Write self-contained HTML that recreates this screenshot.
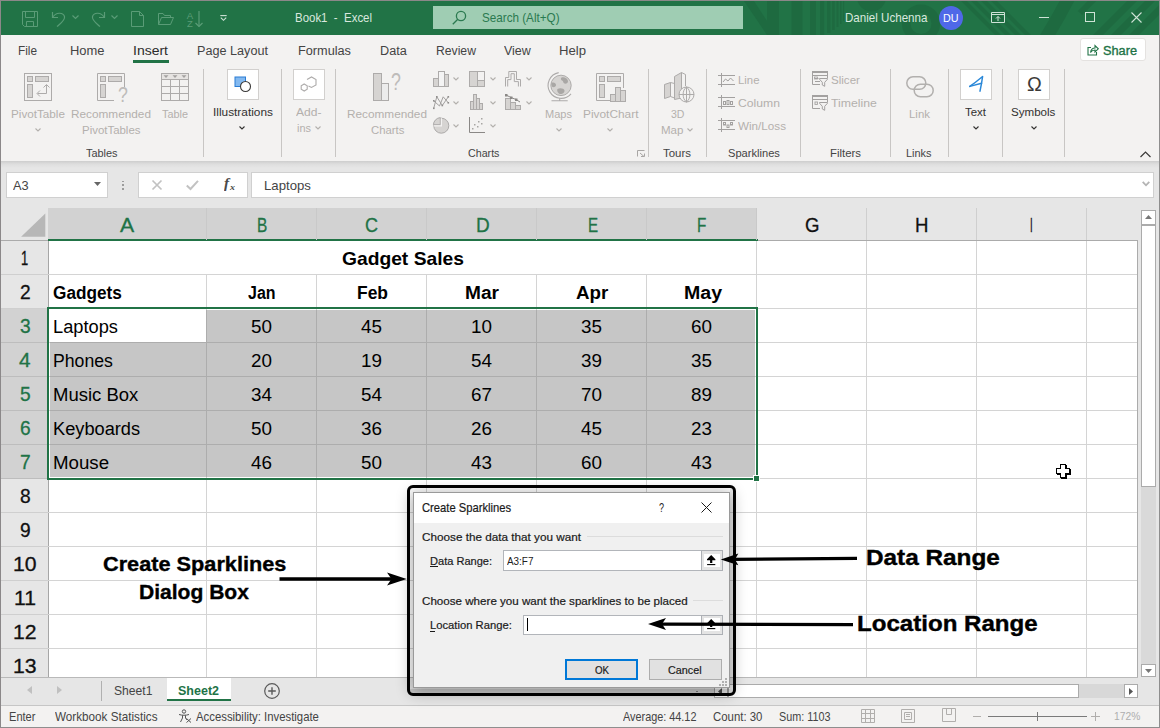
<!DOCTYPE html>
<html><head><meta charset="utf-8"><title>Excel</title>
<style>
html,body{margin:0;padding:0;}
body{width:1160px;height:728px;overflow:hidden;position:relative;background:#e6e6e6;font-family:"Liberation Sans",sans-serif;}
.r{position:absolute;box-sizing:border-box;display:block;}
.t{position:absolute;display:block;white-space:pre;transform-origin:0 0;font-family:"Liberation Sans",sans-serif;}
svg{overflow:visible;}
</style></head><body>
<div class="r" style="left:0px;top:0px;width:1160px;height:728px;background:#e6e6e6;"></div>
<div class="r" style="left:0px;top:1px;width:1160px;height:34px;background:#217346;"></div>
<svg class="r" style="left:740px;top:1px;overflow:hidden;" width="420" height="34" viewBox="0 0 420 34"><g fill="#1e6a40" stroke="none"><path d="M4 0L14 0L36 34L27 34Z"/><rect x="27" y="0" width="12" height="34"/><rect x="51.5" y="0" width="11" height="34"/><rect x="70" y="0" width="6" height="34"/><rect x="80" y="0" width="4.2" height="34"/><rect x="87" y="0" width="3.4" height="32"/><rect x="92.2" y="0" width="2.5" height="29"/><rect x="96.5" y="0" width="2" height="26"/><rect x="100" y="0" width="1.5" height="23"/><rect x="103" y="0" width="1.2" height="20"/><circle cx="131.5" cy="-4" r="14.5"/></g><g fill="none" stroke="#1e6a40"><circle cx="181" cy="22.5" r="14.8" stroke-width="8.5"/><path d="M222 -2L262 38M232 -2L272 38M242 -2L282 38M252 -2L292 38" stroke-width="4.2"/><path d="M330 -6C322 10 314 24 304 40" stroke-width="13"/><path d="M340 12L356 -4" stroke-width="6"/><path d="M352 40L396 -4M370 40L414 -4M388 40L432 -4" stroke-width="7"/></g></svg>
<div class="r" style="left:0px;top:0px;width:1160px;height:1px;background:#8b8889;"></div>
<div class="r" style="left:0px;top:0px;width:1px;height:728px;background:#8b8889;"></div>
<svg class="r" style="left:22px;top:11px;" width="17" height="17" viewBox="0 0 17 17"><g fill="none" stroke="#5a9c77" stroke-width="1"><path d="M0.5 0.5H15.5V15.5H2.5L0.5 13.5Z"/><path d="M3.5 0.5V6.5H12.5V0.5"/><path d="M4.5 15.5V10.5H11.5V15.5"/></g></svg>
<svg class="r" style="left:51px;top:11px;" width="18" height="17" viewBox="0 0 18 17"><g fill="none" stroke="#5a9c77" stroke-width="1.2"><path d="M1.5 1V6.5H7"/><path d="M1.5 6.5C5 1 12 1 13.5 5.5C14.5 9 10 12 6 15.5"/></g></svg>
<svg class="r" style="left:72px;top:15px;" width="7" height="5" viewBox="0 0 7 5"><path d="M0.5 0.5L3.5 3.5L6.5 0.5" fill="none" stroke="#5a9c77" stroke-width="1.2"/></svg>
<svg class="r" style="left:90px;top:11px;" width="18" height="17" viewBox="0 0 18 17"><g fill="none" stroke="#5a9c77" stroke-width="1.2"><path d="M14.5 1V6.5H9"/><path d="M14.5 6.5C11 1 4 1 2.5 5.5C1.5 9 6 12 10 15.5"/></g></svg>
<svg class="r" style="left:111px;top:15px;" width="7" height="5" viewBox="0 0 7 5"><path d="M0.5 0.5L3.5 3.5L6.5 0.5" fill="none" stroke="#5a9c77" stroke-width="1.2"/></svg>
<svg class="r" style="left:131px;top:11px;" width="13" height="16" viewBox="0 0 13 16"><g fill="none" stroke="#5a9c77" stroke-width="1"><path d="M0.5 0.5H8.5L12.5 4.5V15.5H0.5Z"/><path d="M8.5 0.5V4.5H12.5"/></g></svg>
<svg class="r" style="left:158px;top:13px;" width="16" height="12" viewBox="0 0 16 12"><g fill="none" stroke="#5a9c77" stroke-width="1"><path d="M0.5 11.5V0.5H5L6.5 2.5H12.5V4.5"/><path d="M0.5 11.5L3.5 4.5H15.5L12.5 11.5Z"/></g></svg>
<span class="t" style="left:186.80px;top:11.000px;font-size:9.60px;line-height:9.60px;color:#5a9c77;transform:scaleX(1.0000);">A</span>
<span class="t" style="left:187.00px;top:19.000px;font-size:9.60px;line-height:9.60px;color:#5a9c77;transform:scaleX(0.9831);">Z</span>
<svg class="r" style="left:195px;top:11px;" width="8" height="17" viewBox="0 0 8 17"><g fill="none" stroke="#5a9c77" stroke-width="1.2"><path d="M4 0V15.5"/><path d="M0.5 12L4 15.5L7.5 12"/></g></svg>
<svg class="r" style="left:220px;top:15px;" width="7" height="6" viewBox="0 0 7 6"><g fill="none" stroke="#cfe3d7" stroke-width="1.1"><path d="M0.3 0.6H6.7"/><path d="M0.8 2.6L3.5 5.3L6.2 2.6"/></g></svg>
<span class="t" style="left:295.00px;top:11.000px;font-size:13.00px;line-height:13.00px;color:#d9e8df;transform:scaleX(0.8810);">Book1  -  Excel</span>
<div class="r" style="left:433px;top:6px;width:310px;height:23px;background:#9fcdb3;"></div>
<svg class="r" style="left:452px;top:10px;" width="15" height="15" viewBox="0 0 15 15"><g fill="none" stroke="#2b7a50" stroke-width="1.3"><circle cx="9" cy="6" r="4.6"/><path d="M5.8 9.2L0.8 14.2"/></g></svg>
<span class="t" style="left:482.00px;top:11.000px;font-size:13.00px;line-height:13.00px;color:#2b7a50;transform:scaleX(0.8980);">Search (Alt+Q)</span>
<span class="t" style="left:845.00px;top:11.000px;font-size:13.00px;line-height:13.00px;color:#d9e8df;transform:scaleX(0.8909);">Daniel Uchenna</span>
<div class="r" style="left:938.5px;top:5.5px;width:24px;height:24px;border-radius:50%;background:#4f68e8;"></div>
<span class="t" style="left:943.00px;top:13.000px;font-size:11.00px;line-height:11.00px;color:#ffffff;transform:scaleX(0.9748);">DU</span>
<svg class="r" style="left:991px;top:12px;" width="14" height="11" viewBox="0 0 14 11"><g fill="none" stroke="#cfe3d7" stroke-width="1"><path d="M0.5 0.5H13.5V10.5H0.5Z"/><path d="M0.5 2.5H13.5"/><path d="M7 9V4.5M5 6.5L7 4.5L9 6.5"/></g></svg>
<div class="r" style="left:1039px;top:17px;width:10px;height:1px;background:#cfe3d7;"></div>
<div class="r" style="left:1085px;top:12px;width:10px;height:10px;border:1px solid #cfe3d7;"></div>
<svg class="r" style="left:1131px;top:12px;" width="11" height="11" viewBox="0 0 11 11"><path d="M0.5 0.5L10.5 10.5M10.5 0.5L0.5 10.5" fill="none" stroke="#cfe3d7" stroke-width="1.1"/></svg>
<div class="r" style="left:1px;top:35px;width:1159px;height:127px;background:#f3f2f1;"></div>
<span class="t" style="left:18.00px;top:45.000px;font-size:12.30px;line-height:12.30px;color:#444444;transform:scaleX(0.9596);">File</span>
<span class="t" style="left:70.00px;top:45.000px;font-size:12.30px;line-height:12.30px;color:#444444;transform:scaleX(1.0518);">Home</span>
<span class="t" style="left:133.00px;top:45.000px;font-size:12.30px;line-height:12.30px;color:#2b2b2b;transform:scaleX(1.1364);">Insert</span>
<div class="r" style="left:133px;top:60px;width:36px;height:3px;background:#217346;"></div>
<span class="t" style="left:197.00px;top:45.000px;font-size:12.30px;line-height:12.30px;color:#444444;transform:scaleX(1.0275);">Page Layout</span>
<span class="t" style="left:298.00px;top:45.000px;font-size:12.30px;line-height:12.30px;color:#444444;transform:scaleX(1.0331);">Formulas</span>
<span class="t" style="left:380.00px;top:45.000px;font-size:12.30px;line-height:12.30px;color:#444444;transform:scaleX(1.0308);">Data</span>
<span class="t" style="left:436.00px;top:45.000px;font-size:12.30px;line-height:12.30px;color:#444444;transform:scaleX(0.9901);">Review</span>
<span class="t" style="left:504.00px;top:45.000px;font-size:12.30px;line-height:12.30px;color:#444444;transform:scaleX(1.0150);">View</span>
<span class="t" style="left:559.00px;top:45.000px;font-size:12.30px;line-height:12.30px;color:#444444;transform:scaleX(1.0672);">Help</span>
<div class="r" style="left:1079.5px;top:38.4px;width:66.8px;height:22.9px;background:#fff;border:1px solid #e4e2e0;border-radius:3px;"></div>
<svg class="r" style="left:1087px;top:44px;" width="12" height="12" viewBox="0 0 12 12"><g fill="none" stroke="#217346" stroke-width="1.1"><path d="M4 3.5H1V11H9.5V8"/><path d="M3.5 8.5C4 5.5 6 4 8 4V1.5L11.3 4.8L8 8V6C6 6 4.5 7 3.5 8.5Z"/></g></svg>
<span class="t" style="left:1103.00px;top:45.000px;font-size:12.30px;line-height:12.30px;color:#217346;transform:scaleX(1.0366);-webkit-text-stroke:0.35px #217346;">Share</span>
<div class="r" style="left:203px;top:69px;width:1px;height:88px;background:#c8c6c4;"></div>
<div class="r" style="left:281px;top:69px;width:1px;height:88px;background:#c8c6c4;"></div>
<div class="r" style="left:335px;top:69px;width:1px;height:88px;background:#c8c6c4;"></div>
<div class="r" style="left:648px;top:69px;width:1px;height:88px;background:#c8c6c4;"></div>
<div class="r" style="left:706px;top:69px;width:1px;height:88px;background:#c8c6c4;"></div>
<div class="r" style="left:800px;top:69px;width:1px;height:88px;background:#c8c6c4;"></div>
<div class="r" style="left:890px;top:69px;width:1px;height:88px;background:#c8c6c4;"></div>
<div class="r" style="left:948px;top:69px;width:1px;height:88px;background:#c8c6c4;"></div>
<div class="r" style="left:1002px;top:69px;width:1px;height:88px;background:#c8c6c4;"></div>
<div class="r" style="left:1064px;top:69px;width:1px;height:88px;background:#c8c6c4;"></div>
<div class="r" style="left:1px;top:161px;width:1159px;height:7px;background:linear-gradient(#cdcdcd,#dedede 45%,#e6e6e6);"></div>
<svg class="r" style="left:24px;top:73px;" width="28" height="28" viewBox="0 0 28 28"><g fill="none" stroke="#adabaa" stroke-width="1"><rect x="0.5" y="0.5" width="27" height="27" fill="#f3f2f1"/></g><rect x="3.5" y="3.5" width="5" height="5" fill="#d6d4d2" stroke="#adabaa"/><rect x="11.5" y="3.5" width="13" height="5" fill="#d6d4d2" stroke="#adabaa"/><rect x="3.5" y="11.5" width="5" height="13" fill="#d6d4d2" stroke="#adabaa"/><path d="M22.5 12V20.5H13.5M16 17.5L13 20.5L16 23.5M19.5 14.5L22.5 11.5L25.5 14.5" fill="none" stroke="#adabaa"/></svg>
<span class="t" style="left:11.00px;top:108.000px;font-size:11.70px;line-height:11.70px;color:#b3b0ad;transform:scaleX(1.0000);">PivotTable</span>
<svg class="r" style="left:34.5px;top:128px;" width="6" height="4" viewBox="0 0 6 4"><path d="M0.5 0.5L3 3L5.5 0.5" fill="none" stroke="#b3b0ad" stroke-width="1.1"/></svg>
<svg class="r" style="left:97px;top:73px;" width="30" height="30" viewBox="0 0 30 30"><path d="M27.5 14V0.5H0.5V27.5H17" fill="none" stroke="#adabaa"/><rect x="3.5" y="3.5" width="5" height="5" fill="#d6d4d2" stroke="#adabaa"/><rect x="11.5" y="3.5" width="13" height="5" fill="#d6d4d2" stroke="#adabaa"/><rect x="3.5" y="11.5" width="5" height="13" fill="#d6d4d2" stroke="#adabaa"/></svg>
<span class="t" style="left:117.50px;top:85.000px;font-size:21.50px;line-height:21.50px;color:#bebcba;transform:scaleX(0.8250);">?</span>
<span class="t" style="left:71.00px;top:108.000px;font-size:11.70px;line-height:11.70px;color:#b3b0ad;transform:scaleX(1.0088);">Recommended</span>
<span class="t" style="left:81.50px;top:124.000px;font-size:11.70px;line-height:11.70px;color:#b3b0ad;transform:scaleX(0.9783);">PivotTables</span>
<svg class="r" style="left:161px;top:73px;" width="28" height="28" viewBox="0 0 28 28"><rect x="0.5" y="0.5" width="27" height="27" fill="#f3f2f1" stroke="#adabaa"/><rect x="1" y="1" width="26" height="5.5" fill="#e6e4e2"/><path d="M0.5 6.5H27.5M0.5 13.5H27.5M0.5 20.5H27.5M9.5 6.5V27.5M18.5 6.5V27.5" stroke="#adabaa" fill="none"/><path d="M2.5 2.3H7.5L5 5ZM11.5 2.3H16.5L14 5ZM20.5 2.3H25.5L23 5Z" fill="#a3a1a0"/></svg>
<span class="t" style="left:162.00px;top:108.000px;font-size:11.70px;line-height:11.70px;color:#b3b0ad;transform:scaleX(0.9286);">Table</span>
<span class="t" style="left:86.00px;top:147.000px;font-size:11.60px;line-height:11.60px;color:#444444;transform:scaleX(0.9403);">Tables</span>
<div class="r" style="left:227px;top:69px;width:32px;height:31px;background:#fff;border:1px solid #d2d0ce;"></div>
<svg class="r" style="left:234px;top:76px;" width="18" height="17" viewBox="0 0 18 17"><rect x="1" y="1" width="10.5" height="9.5" fill="#83b9f0" stroke="#2b7cd3" stroke-width="1"/><circle cx="11.5" cy="10.5" r="5" fill="#fff" stroke="#3b3a39" stroke-width="1.1"/></svg>
<span class="t" style="left:212.50px;top:106.000px;font-size:11.70px;line-height:11.70px;color:#323130;transform:scaleX(1.0135);">Illustrations</span>
<svg class="r" style="left:239px;top:125.5px;" width="6" height="4" viewBox="0 0 6 4"><path d="M0.5 0.5L3 3L5.5 0.5" fill="none" stroke="#323130" stroke-width="1.1"/></svg>
<div class="r" style="left:293px;top:69px;width:32px;height:31px;background:#fff;border:1px solid #d2d0ce;"></div>
<svg class="r" style="left:300px;top:76px;" width="18" height="17" viewBox="0 0 18 17"><g fill="none" stroke="#adabaa" stroke-width="1.1"><path d="M7 3.5L11.5 1L16 3.5V9L11.5 11.5L8.5 10"/><path d="M4.2 8L7.2 9.7V13.2L4.2 15L1.2 13.2V9.7Z"/></g></svg>
<span class="t" style="left:295.50px;top:106.000px;font-size:11.70px;line-height:11.70px;color:#b3b0ad;transform:scaleX(1.0324);">Add-</span>
<span class="t" style="left:297.00px;top:122.000px;font-size:11.70px;line-height:11.70px;color:#b3b0ad;transform:scaleX(0.9333);">ins</span>
<svg class="r" style="left:314.5px;top:126px;" width="6" height="4" viewBox="0 0 6 4"><path d="M0.5 0.5L3 3L5.5 0.5" fill="none" stroke="#b3b0ad" stroke-width="1.1"/></svg>
<svg class="r" style="left:373px;top:72px;" width="29" height="30" viewBox="0 0 29 30"><rect x="0.5" y="1.5" width="8" height="27" fill="#d6d4d2" stroke="#adabaa"/><rect x="8.5" y="11.5" width="7" height="17" fill="#ececec" stroke="#adabaa"/></svg>
<span class="t" style="left:391.30px;top:71.000px;font-size:23.50px;line-height:23.50px;color:#bebcba;transform:scaleX(0.7557);">?</span>
<span class="t" style="left:347.00px;top:108.000px;font-size:11.70px;line-height:11.70px;color:#b3b0ad;transform:scaleX(1.0088);">Recommended</span>
<span class="t" style="left:370.50px;top:124.000px;font-size:11.70px;line-height:11.70px;color:#b3b0ad;transform:scaleX(0.9710);">Charts</span>
<svg class="r" style="left:433px;top:71px;" width="17" height="16" viewBox="0 0 17 16"><g fill="#d6d4d2" stroke="#adabaa"><rect x="0.5" y="7.5" width="5" height="8"/><rect x="11.5" y="3.5" width="4" height="12"/><rect x="5.5" y="0.5" width="6" height="15" fill="#f4f4f4"/></g></svg>
<svg class="r" style="left:453px;top:77px;" width="6" height="4" viewBox="0 0 6 4"><path d="M0.5 0.5L3 3L5.5 0.5" fill="none" stroke="#b3b0ad" stroke-width="1.1"/></svg>
<svg class="r" style="left:469px;top:71px;" width="17" height="16" viewBox="0 0 17 16"><g stroke="#adabaa"><rect x="0.5" y="0.5" width="15" height="15" fill="#f3f2f1"/><rect x="0.5" y="0.5" width="8" height="15" fill="#d6d4d2"/><rect x="8.5" y="9.5" width="7" height="6" fill="#d6d4d2"/></g></svg>
<svg class="r" style="left:489.5px;top:77px;" width="6" height="4" viewBox="0 0 6 4"><path d="M0.5 0.5L3 3L5.5 0.5" fill="none" stroke="#b3b0ad" stroke-width="1.1"/></svg>
<svg class="r" style="left:505px;top:71px;" width="17" height="16" viewBox="0 0 17 16"><path d="M0.5 15.5V6.5H3.8V0.5H11.5V8.5H15.5V15.5" fill="none" stroke="#adabaa"/><path d="M2.7 15.5V8.6H6V2.7H9.3V10.6H13.4V15.5" fill="none" stroke="#adabaa"/></svg>
<svg class="r" style="left:526px;top:77px;" width="6" height="4" viewBox="0 0 6 4"><path d="M0.5 0.5L3 3L5.5 0.5" fill="none" stroke="#b3b0ad" stroke-width="1.1"/></svg>
<svg class="r" style="left:433px;top:94px;" width="17" height="16" viewBox="0 0 17 16"><g fill="none" stroke="#a3a1a0" stroke-width="1"><path d="M0.7 14.3L3.8 2.8L9.3 11.5L15.3 2.8"/><path d="M0.7 6.8L6.5 12L10.2 2.8L15.3 8.8"/></g><g fill="#8f8d8c"><rect x="0" y="6" width="1.6" height="1.6"/><rect x="3" y="2" width="1.6" height="1.6"/><rect x="8.5" y="10.7" width="1.6" height="1.6"/><rect x="14.5" y="2" width="1.6" height="1.6"/><rect x="14.5" y="8" width="1.6" height="1.6"/><rect x="0" y="13.5" width="1.6" height="1.6"/></g></svg>
<svg class="r" style="left:453px;top:101px;" width="6" height="4" viewBox="0 0 6 4"><path d="M0.5 0.5L3 3L5.5 0.5" fill="none" stroke="#b3b0ad" stroke-width="1.1"/></svg>
<svg class="r" style="left:470px;top:94px;" width="15" height="16" viewBox="0 0 15 16"><g fill="#d6d4d2" stroke="#adabaa"><rect x="0.5" y="7.5" width="3" height="8"/><rect x="3.5" y="0.5" width="3" height="15"/><rect x="6.5" y="4.5" width="3" height="11"/><rect x="9.5" y="9.5" width="3" height="6"/></g></svg>
<svg class="r" style="left:489.5px;top:101px;" width="6" height="4" viewBox="0 0 6 4"><path d="M0.5 0.5L3 3L5.5 0.5" fill="none" stroke="#b3b0ad" stroke-width="1.1"/></svg>
<svg class="r" style="left:505px;top:94px;" width="17" height="16" viewBox="0 0 17 16"><g fill="#d6d4d2" stroke="#adabaa"><rect x="0.5" y="4.5" width="5" height="11"/><rect x="5.5" y="8.5" width="5" height="7"/><rect x="10.5" y="11.5" width="5" height="4"/></g><path d="M1 1L6 3.5L11 5.5L15 8" fill="none" stroke="#8a8886"/><g fill="#8a8886"><rect x="0" y="0" width="2.5" height="2.5"/><rect x="5" y="2.5" width="2.5" height="2.5"/><rect x="10" y="4.5" width="2.5" height="2.5"/></g></svg>
<svg class="r" style="left:526px;top:101px;" width="6" height="4" viewBox="0 0 6 4"><path d="M0.5 0.5L3 3L5.5 0.5" fill="none" stroke="#b3b0ad" stroke-width="1.1"/></svg>
<svg class="r" style="left:433px;top:117px;" width="17" height="17" viewBox="0 0 17 17"><circle cx="8.3" cy="8.7" r="7.5" fill="#d6d4d2" stroke="#adabaa"/><path d="M7.3 7.7V0.6A7.6 7.6 0 0 0 0.4 7.7Z" fill="#d6d4d2" stroke="#adabaa"/><path d="M8.4 1.2V8.8H0.8" stroke="#f3f2f1" stroke-width="1.2" fill="none"/></svg>
<svg class="r" style="left:453px;top:124px;" width="6" height="4" viewBox="0 0 6 4"><path d="M0.5 0.5L3 3L5.5 0.5" fill="none" stroke="#b3b0ad" stroke-width="1.1"/></svg>
<svg class="r" style="left:469px;top:117px;" width="17" height="17" viewBox="0 0 17 17"><path d="M0.5 0V15.5H16" fill="none" stroke="#8a8886"/><g fill="#a8a6a4"><rect x="3" y="11" width="1.5" height="1.5"/><rect x="5" y="7" width="1.5" height="1.5"/><rect x="8" y="9" width="1.5" height="1.5"/><rect x="9" y="4" width="1.5" height="1.5"/><rect x="12" y="6" width="1.5" height="1.5"/><rect x="12" y="1" width="1.5" height="1.5"/></g></svg>
<svg class="r" style="left:489.5px;top:124px;" width="6" height="4" viewBox="0 0 6 4"><path d="M0.5 0.5L3 3L5.5 0.5" fill="none" stroke="#b3b0ad" stroke-width="1.1"/></svg>
<span class="t" style="left:468.00px;top:147.000px;font-size:11.60px;line-height:11.60px;color:#444444;transform:scaleX(0.9211);">Charts</span>
<svg class="r" style="left:546px;top:71px;" width="28" height="31" viewBox="0 0 28 31"><circle cx="15" cy="14.4" r="10.2" fill="#d6d4d2" stroke="#adabaa"/><g fill="#a9a7a5"><path d="M15.5 6.5C18 5.5 21.5 7 22 10C22.3 12 20 13 18.5 12.5C17 12 17.5 10 16 9.5C14.8 9 14.5 7.2 15.5 6.5Z"/><path d="M5.6 12C7.5 11 10 12 10 14C10 15.8 8 16.5 6.5 16C5.5 15.5 5 13 5.6 12Z"/><path d="M11.5 18C13.5 16.5 18 17 18.5 19.5C18.8 21.5 16 23.5 14 23C12 22.5 10.5 19.5 11.5 18Z"/></g><path d="M12.7 1.6A13 13 0 1 0 25 22.8" fill="none" stroke="#adabaa" stroke-width="1.1"/><path d="M13.7 27.3V29.7M5.5 29.8H21.7" stroke="#adabaa" fill="none" stroke-width="1.1"/></svg>
<span class="t" style="left:545.00px;top:108.000px;font-size:11.70px;line-height:11.70px;color:#b3b0ad;transform:scaleX(0.9441);">Maps</span>
<svg class="r" style="left:555.5px;top:128px;" width="6" height="4" viewBox="0 0 6 4"><path d="M0.5 0.5L3 3L5.5 0.5" fill="none" stroke="#b3b0ad" stroke-width="1.1"/></svg>
<svg class="r" style="left:596px;top:73px;" width="30" height="30" viewBox="0 0 30 30"><path d="M27.5 15V0.5H0.5V27.5H14" fill="none" stroke="#adabaa"/><rect x="3.5" y="3.5" width="5" height="5" fill="#d6d4d2" stroke="#adabaa"/><rect x="11.5" y="3.5" width="13" height="5" fill="#d6d4d2" stroke="#adabaa"/><rect x="3.5" y="11.5" width="5" height="13" fill="#d6d4d2" stroke="#adabaa"/><g fill="#d6d4d2" stroke="#adabaa"><rect x="14.5" y="21.5" width="5" height="7"/><rect x="19.5" y="14.5" width="5" height="14"/><rect x="24.5" y="17.5" width="5" height="11"/></g></svg>
<span class="t" style="left:582.50px;top:108.000px;font-size:11.70px;line-height:11.70px;color:#b3b0ad;transform:scaleX(1.0165);">PivotChart</span>
<svg class="r" style="left:606.5px;top:128px;" width="6" height="4" viewBox="0 0 6 4"><path d="M0.5 0.5L3 3L5.5 0.5" fill="none" stroke="#b3b0ad" stroke-width="1.1"/></svg>
<svg class="r" style="left:637px;top:150px;" width="8" height="7" viewBox="0 0 8 7"><path d="M0.5 6.5V0.5H7.5M3 3L7 6.5M7.5 3.5V6.5H4" fill="none" stroke="#a8a6a4" stroke-width="1"/></svg>
<svg class="r" style="left:664px;top:72px;" width="31" height="31" viewBox="0 0 31 31"><g fill="#d6d4d2" stroke="#adabaa"><path d="M0.5 12.5L6.5 10.5V24.5L0.5 26.5Z"/><path d="M6.5 10.5L10.5 11.5V26L6.5 24.5Z" fill="#f3f2f1"/><path d="M10.5 4.5L17.5 0.5V26L10.5 27.5Z"/><path d="M17.5 0.5L21.5 2.5V14" fill="none"/></g><circle cx="22.5" cy="22.5" r="7.5" fill="#f3f2f1" stroke="#adabaa"/><path d="M15 22.5H30M22.5 15V30M22.5 15C18 18 18 27 22.5 30M22.5 15C27 18 27 27 22.5 30" fill="none" stroke="#adabaa"/></svg>
<span class="t" style="left:671.00px;top:108.000px;font-size:11.70px;line-height:11.70px;color:#b3b0ad;transform:scaleX(0.9000);">3D</span>
<span class="t" style="left:660.50px;top:124.000px;font-size:11.70px;line-height:11.70px;color:#b3b0ad;transform:scaleX(0.9868);">Map</span>
<svg class="r" style="left:687px;top:128px;" width="6" height="4" viewBox="0 0 6 4"><path d="M0.5 0.5L3 3L5.5 0.5" fill="none" stroke="#b3b0ad" stroke-width="1.1"/></svg>
<span class="t" style="left:663.00px;top:147.000px;font-size:11.60px;line-height:11.60px;color:#444444;transform:scaleX(0.9859);">Tours</span>
<svg class="r" style="left:718px;top:72.5px;" width="17" height="14" viewBox="0 0 17 14"><path d="M3.5 0V14M0 2.5H17M0 11.5H17" fill="none" stroke="#a3a1a0"/><path d="M5 9L7.5 6L10 8L12.5 5L15.5 8" fill="none" stroke="#a3a1a0"/></svg>
<span class="t" style="left:737.50px;top:74.000px;font-size:11.70px;line-height:11.70px;color:#b3b0ad;transform:scaleX(0.9729);">Line</span>
<svg class="r" style="left:718px;top:95px;" width="17" height="14" viewBox="0 0 17 14"><path d="M3.5 0V14M0 2.5H17M0 11.5H17" fill="none" stroke="#a3a1a0"/><g fill="none" stroke="#a3a1a0"><rect x="5.5" y="6.5" width="2" height="3"/><rect x="9" y="5.5" width="2" height="4"/><rect x="12.5" y="6.5" width="2" height="3"/></g></svg>
<span class="t" style="left:737.50px;top:97.000px;font-size:11.70px;line-height:11.70px;color:#b3b0ad;transform:scaleX(1.0422);">Column</span>
<svg class="r" style="left:718px;top:118px;" width="17" height="14" viewBox="0 0 17 14"><path d="M3.5 0V14M0 2.5H17M0 11.5H17" fill="none" stroke="#a3a1a0"/><g fill="none" stroke="#a3a1a0"><rect x="5.5" y="4.5" width="2" height="2.5"/><rect x="9" y="7" width="2" height="2.5"/><rect x="12.5" y="4.5" width="2" height="2.5"/></g></svg>
<span class="t" style="left:737.50px;top:120.000px;font-size:11.70px;line-height:11.70px;color:#b3b0ad;transform:scaleX(0.9979);">Win/Loss</span>
<span class="t" style="left:727.50px;top:147.000px;font-size:11.60px;line-height:11.60px;color:#444444;transform:scaleX(0.9594);">Sparklines</span>
<svg class="r" style="left:812px;top:71px;" width="16" height="16" viewBox="0 0 16 16"><rect x="0" y="0" width="16" height="2" fill="#a3a1a0"/><path d="M0.5 1V13.5H8M15.5 1V7M0.5 4.5H15.5" fill="none" stroke="#a3a1a0"/><path d="M3 7.5H6.5M3 10.5H8" stroke="#a3a1a0" fill="none"/><rect x="2.5" y="6" width="3" height="2" fill="none" stroke="#a3a1a0" stroke-width="0.8"/><path d="M7.5 7.5H15.5V8.2L12.7 11.3V15.3L10.3 14V11.3L7.5 8.2Z" fill="#f3f2f1" stroke="#a3a1a0"/></svg>
<span class="t" style="left:831.00px;top:74.000px;font-size:11.70px;line-height:11.70px;color:#b3b0ad;transform:scaleX(0.9898);">Slicer</span>
<svg class="r" style="left:812px;top:95px;" width="16" height="16" viewBox="0 0 16 16"><rect x="0" y="0" width="16" height="2" fill="#a3a1a0"/><path d="M0.5 1V13.5H8M15.5 1V7M0.5 4.5H15.5" fill="none" stroke="#a3a1a0"/><rect x="3" y="7" width="2.4" height="2.4" fill="none" stroke="#a3a1a0" stroke-width="0.9"/><path d="M7.5 7.5H15.5V8.2L12.7 11.3V15.3L10.3 14V11.3L7.5 8.2Z" fill="#f3f2f1" stroke="#a3a1a0"/></svg>
<span class="t" style="left:831.00px;top:97.000px;font-size:11.70px;line-height:11.70px;color:#b3b0ad;transform:scaleX(1.0502);">Timeline</span>
<span class="t" style="left:830.00px;top:147.000px;font-size:11.60px;line-height:11.60px;color:#444444;transform:scaleX(0.9810);">Filters</span>
<svg class="r" style="left:906px;top:76px;" width="29" height="22" viewBox="0 0 29 22"><g fill="none" stroke="#b2b0ae" stroke-width="1.5"><rect x="0.8" y="0.8" width="19" height="12.5" rx="6.2"/><rect x="8.2" y="8.2" width="19" height="12.5" rx="6.2"/></g></svg>
<span class="t" style="left:909.00px;top:108.000px;font-size:11.70px;line-height:11.70px;color:#b3b0ad;transform:scaleX(0.9767);">Link</span>
<span class="t" style="left:906.00px;top:147.000px;font-size:11.60px;line-height:11.60px;color:#444444;transform:scaleX(0.9410);">Links</span>
<div class="r" style="left:960px;top:69px;width:32px;height:31px;background:#fff;border:1px solid #d2d0ce;"></div>
<svg class="r" style="left:960px;top:69px;" width="32" height="31" viewBox="0 0 32 31"><g fill="none" stroke="#2b88d8" stroke-width="1.5" stroke-linecap="round" stroke-linejoin="round"><path d="M9.8 17.4C14 14.5 19 10.5 22.6 7.5C22 12 21 17.5 20 22.2"/><path d="M9.8 17.4L21.6 14.2"/></g></svg>
<span class="t" style="left:965.00px;top:106.000px;font-size:11.70px;line-height:11.70px;color:#323130;transform:scaleX(0.9767);">Text</span>
<svg class="r" style="left:973px;top:126px;" width="6" height="4" viewBox="0 0 6 4"><path d="M0.5 0.5L3 3L5.5 0.5" fill="none" stroke="#323130" stroke-width="1.1"/></svg>
<div class="r" style="left:1018px;top:69px;width:32px;height:31px;background:#fff;border:1px solid #d2d0ce;"></div>
<span class="t" style="left:1026.60px;top:73.000px;font-size:21.00px;line-height:21.00px;color:#3b3a39;transform:scaleX(0.9427);">Ω</span>
<span class="t" style="left:1011.00px;top:106.000px;font-size:11.70px;line-height:11.70px;color:#323130;transform:scaleX(0.9911);">Symbols</span>
<svg class="r" style="left:1030.5px;top:126px;" width="6" height="4" viewBox="0 0 6 4"><path d="M0.5 0.5L3 3L5.5 0.5" fill="none" stroke="#323130" stroke-width="1.1"/></svg>
<svg class="r" style="left:1140px;top:151px;" width="11" height="7" viewBox="0 0 11 7"><path d="M0.5 6L5.5 1L10.5 6" fill="none" stroke="#3b3a39" stroke-width="1.2"/></svg>
<div class="r" style="left:6px;top:172px;width:102px;height:26px;background:#fff;border:1px solid #d0d0d0;"></div>
<span class="t" style="left:13.00px;top:181.000px;font-size:11.90px;line-height:11.90px;color:#444;transform:scaleX(1.0753);">A3</span>
<svg class="r" style="left:94px;top:182px;" width="7" height="4" viewBox="0 0 7 4"><path d="M0 0H7L3.5 4Z" fill="#666"/></svg>
<div class="r" style="left:122.2px;top:180.6px;width:1.6px;height:1.6px;background:#9c9c9c;"></div>
<div class="r" style="left:122.2px;top:184.4px;width:1.6px;height:1.6px;background:#9c9c9c;"></div>
<div class="r" style="left:122.2px;top:188.2px;width:1.6px;height:1.6px;background:#9c9c9c;"></div>
<div class="r" style="left:138px;top:172px;width:110px;height:26px;background:#fff;border:1px solid #d0d0d0;"></div>
<svg class="r" style="left:152px;top:180px;" width="10" height="10" viewBox="0 0 10 10"><path d="M0.5 0.5L9.5 9.5M9.5 0.5L0.5 9.5" fill="none" stroke="#c2c2c2" stroke-width="1.7"/></svg>
<svg class="r" style="left:186px;top:180px;" width="13" height="10" viewBox="0 0 13 10"><path d="M0.8 5.5L4.5 9L12 0.8" fill="none" stroke="#c2c2c2" stroke-width="2"/></svg>
<span class="t" style="left:224.00px;top:177.000px;font-size:14.00px;line-height:14.00px;color:#4a4a4a;transform:scaleX(1.1017);font-weight:bold;font-style:italic;font-family:'Liberation Serif',serif;">f</span>
<span class="t" style="left:230.02px;top:183.000px;font-size:9.00px;line-height:9.00px;color:#4a4a4a;transform:scaleX(1.1064);font-weight:bold;font-style:italic;font-family:'Liberation Serif',serif;">x</span>
<div class="r" style="left:251px;top:172px;width:903px;height:26px;background:#fff;border:1px solid #d0d0d0;"></div>
<span class="t" style="left:263.50px;top:181.000px;font-size:11.90px;line-height:11.90px;color:#444;transform:scaleX(1.1085);">Laptops</span>
<svg class="r" style="left:1142px;top:181px;" width="8" height="6" viewBox="0 0 8 6"><path d="M0.7 0.8L4 4.3L7.3 0.8" fill="none" stroke="#b4b4b4" stroke-width="1.8"/></svg>
<div class="r" style="left:1px;top:208px;width:1137px;height:470px;background:#ffffff;"></div>
<div class="r" style="left:1px;top:208px;width:1137px;height:32px;background:#e6e6e6;"></div>
<div class="r" style="left:1px;top:240px;width:48px;height:438px;background:#e6e6e6;"></div>
<div class="r" style="left:48.4px;top:208px;width:708.6px;height:31px;background:#d2d2d2;"></div>
<div class="r" style="left:48.4px;top:239px;width:709.6px;height:2px;background:#217346;"></div>
<div class="r" style="left:1px;top:309px;width:47px;height:170px;background:#d2d2d2;"></div>
<div class="r" style="left:206px;top:208px;width:1px;height:32px;background:#c9c9c9;"></div>
<div class="r" style="left:316px;top:208px;width:1px;height:32px;background:#c9c9c9;"></div>
<div class="r" style="left:426px;top:208px;width:1px;height:32px;background:#c9c9c9;"></div>
<div class="r" style="left:536px;top:208px;width:1px;height:32px;background:#c9c9c9;"></div>
<div class="r" style="left:646px;top:208px;width:1px;height:32px;background:#c9c9c9;"></div>
<div class="r" style="left:756px;top:208px;width:1px;height:32px;background:#c9c9c9;"></div>
<div class="r" style="left:866px;top:208px;width:1px;height:32px;background:#cfcfcf;"></div>
<div class="r" style="left:976px;top:208px;width:1px;height:32px;background:#cfcfcf;"></div>
<div class="r" style="left:1086px;top:208px;width:1px;height:32px;background:#cfcfcf;"></div>
<div class="r" style="left:758px;top:240px;width:380px;height:1px;background:#ababab;"></div>
<div class="r" style="left:1px;top:240px;width:47px;height:1px;background:#ababab;"></div>
<svg class="r" style="left:20.5px;top:213px;" width="25" height="24" viewBox="0 0 25 24"><path d="M24.3 0.4V23.7H0.1Z" fill="#b7b7b7"/></svg>
<span class="t" style="left:120.20px;top:215.000px;font-size:20.80px;line-height:20.80px;color:#217346;transform:scaleX(1.0216);-webkit-text-stroke:0.3px currentColor;">A</span>
<span class="t" style="left:256.50px;top:215.000px;font-size:20.80px;line-height:20.80px;color:#217346;transform:scaleX(0.7410);-webkit-text-stroke:0.3px currentColor;">B</span>
<span class="t" style="left:365.00px;top:215.000px;font-size:20.80px;line-height:20.80px;color:#217346;transform:scaleX(0.8667);-webkit-text-stroke:0.3px currentColor;">C</span>
<span class="t" style="left:475.60px;top:215.000px;font-size:20.80px;line-height:20.80px;color:#217346;transform:scaleX(0.9133);-webkit-text-stroke:0.3px currentColor;">D</span>
<span class="t" style="left:587.60px;top:215.000px;font-size:20.80px;line-height:20.80px;color:#217346;transform:scaleX(0.7266);-webkit-text-stroke:0.3px currentColor;">E</span>
<span class="t" style="left:697.20px;top:215.000px;font-size:20.80px;line-height:20.80px;color:#217346;transform:scaleX(0.7323);-webkit-text-stroke:0.3px currentColor;">F</span>
<span class="t" style="left:804.50px;top:215.000px;font-size:20.80px;line-height:20.80px;color:#111111;transform:scaleX(0.8951);-webkit-text-stroke:0.3px currentColor;">G</span>
<span class="t" style="left:915.20px;top:215.000px;font-size:20.80px;line-height:20.80px;color:#111111;transform:scaleX(0.8933);-webkit-text-stroke:0.3px currentColor;">H</span>
<span class="t" style="left:1029.90px;top:215.000px;font-size:20.80px;line-height:20.80px;color:#111111;transform:scaleX(0.4655);-webkit-text-stroke:0.3px currentColor;">I</span>
<div class="r" style="left:1px;top:274px;width:47px;height:1px;background:#cfcfcf;"></div>
<span class="t" style="left:21.00px;top:248.000px;font-size:20.60px;line-height:20.60px;color:#111111;transform:scaleX(0.6261);-webkit-text-stroke:0.3px currentColor;">1</span>
<div class="r" style="left:1px;top:308px;width:47px;height:1px;background:#cfcfcf;"></div>
<span class="t" style="left:19.65px;top:282.000px;font-size:20.60px;line-height:20.60px;color:#111111;transform:scaleX(0.9304);-webkit-text-stroke:0.3px currentColor;">2</span>
<div class="r" style="left:1px;top:342px;width:47px;height:1px;background:#bdbdbd;"></div>
<span class="t" style="left:19.65px;top:316.000px;font-size:20.60px;line-height:20.60px;color:#217346;transform:scaleX(0.9304);-webkit-text-stroke:0.3px currentColor;">3</span>
<div class="r" style="left:1px;top:376px;width:47px;height:1px;background:#bdbdbd;"></div>
<span class="t" style="left:19.20px;top:350.000px;font-size:20.60px;line-height:20.60px;color:#217346;transform:scaleX(1.0087);-webkit-text-stroke:0.3px currentColor;">4</span>
<div class="r" style="left:1px;top:410px;width:47px;height:1px;background:#bdbdbd;"></div>
<span class="t" style="left:19.65px;top:384.000px;font-size:20.60px;line-height:20.60px;color:#217346;transform:scaleX(0.9304);-webkit-text-stroke:0.3px currentColor;">5</span>
<div class="r" style="left:1px;top:444px;width:47px;height:1px;background:#bdbdbd;"></div>
<span class="t" style="left:19.65px;top:418.000px;font-size:20.60px;line-height:20.60px;color:#217346;transform:scaleX(0.9304);-webkit-text-stroke:0.3px currentColor;">6</span>
<div class="r" style="left:1px;top:478px;width:47px;height:1px;background:#bdbdbd;"></div>
<span class="t" style="left:19.65px;top:452.000px;font-size:20.60px;line-height:20.60px;color:#217346;transform:scaleX(0.9304);-webkit-text-stroke:0.3px currentColor;">7</span>
<div class="r" style="left:1px;top:512px;width:47px;height:1px;background:#cfcfcf;"></div>
<span class="t" style="left:19.65px;top:486.000px;font-size:20.60px;line-height:20.60px;color:#111111;transform:scaleX(0.9304);-webkit-text-stroke:0.3px currentColor;">8</span>
<div class="r" style="left:1px;top:546px;width:47px;height:1px;background:#cfcfcf;"></div>
<span class="t" style="left:19.65px;top:520.000px;font-size:20.60px;line-height:20.60px;color:#111111;transform:scaleX(0.9304);-webkit-text-stroke:0.3px currentColor;">9</span>
<div class="r" style="left:1px;top:580px;width:47px;height:1px;background:#cfcfcf;"></div>
<span class="t" style="left:13.20px;top:554.000px;font-size:20.60px;line-height:20.60px;color:#111111;transform:scaleX(1.0306);-webkit-text-stroke:0.3px currentColor;">10</span>
<div class="r" style="left:1px;top:614px;width:47px;height:1px;background:#cfcfcf;"></div>
<span class="t" style="left:14.00px;top:588.000px;font-size:20.60px;line-height:20.60px;color:#111111;transform:scaleX(1.0280);-webkit-text-stroke:0.3px currentColor;">11</span>
<div class="r" style="left:1px;top:648px;width:47px;height:1px;background:#cfcfcf;"></div>
<span class="t" style="left:13.20px;top:622.000px;font-size:20.60px;line-height:20.60px;color:#111111;transform:scaleX(1.0306);-webkit-text-stroke:0.3px currentColor;">12</span>
<div class="r" style="left:1px;top:682px;width:47px;height:1px;background:#cfcfcf;"></div>
<span class="t" style="left:13.20px;top:656.000px;font-size:20.60px;line-height:20.60px;color:#111111;transform:scaleX(1.0306);-webkit-text-stroke:0.3px currentColor;">13</span>
<div class="r" style="left:48px;top:241px;width:1px;height:437px;background:#a6a6a6;"></div>
<div class="r" style="left:206px;top:241px;width:1px;height:437px;background:#d4d4d4;"></div>
<div class="r" style="left:316px;top:241px;width:1px;height:437px;background:#d4d4d4;"></div>
<div class="r" style="left:426px;top:241px;width:1px;height:437px;background:#d4d4d4;"></div>
<div class="r" style="left:536px;top:241px;width:1px;height:437px;background:#d4d4d4;"></div>
<div class="r" style="left:646px;top:241px;width:1px;height:437px;background:#d4d4d4;"></div>
<div class="r" style="left:756px;top:241px;width:1px;height:437px;background:#d4d4d4;"></div>
<div class="r" style="left:866px;top:241px;width:1px;height:437px;background:#d4d4d4;"></div>
<div class="r" style="left:976px;top:241px;width:1px;height:437px;background:#d4d4d4;"></div>
<div class="r" style="left:1086px;top:241px;width:1px;height:437px;background:#d4d4d4;"></div>
<div class="r" style="left:48px;top:274px;width:1090px;height:1px;background:#d4d4d4;"></div>
<div class="r" style="left:48px;top:308px;width:1090px;height:1px;background:#d4d4d4;"></div>
<div class="r" style="left:48px;top:342px;width:1090px;height:1px;background:#d4d4d4;"></div>
<div class="r" style="left:48px;top:376px;width:1090px;height:1px;background:#d4d4d4;"></div>
<div class="r" style="left:48px;top:410px;width:1090px;height:1px;background:#d4d4d4;"></div>
<div class="r" style="left:48px;top:444px;width:1090px;height:1px;background:#d4d4d4;"></div>
<div class="r" style="left:48px;top:478px;width:1090px;height:1px;background:#d4d4d4;"></div>
<div class="r" style="left:48px;top:512px;width:1090px;height:1px;background:#d4d4d4;"></div>
<div class="r" style="left:48px;top:546px;width:1090px;height:1px;background:#d4d4d4;"></div>
<div class="r" style="left:48px;top:580px;width:1090px;height:1px;background:#d4d4d4;"></div>
<div class="r" style="left:48px;top:614px;width:1090px;height:1px;background:#d4d4d4;"></div>
<div class="r" style="left:48px;top:648px;width:1090px;height:1px;background:#d4d4d4;"></div>
<div class="r" style="left:48px;top:682px;width:1090px;height:1px;background:#d4d4d4;"></div>
<div class="r" style="left:1137px;top:240px;width:1px;height:438px;background:#ababab;"></div>
<div class="r" style="left:49px;top:241px;width:707px;height:33px;background:#fff;"></div>
<div class="r" style="left:50px;top:310px;width:705px;height:167px;background:#c6c6c6;"></div>
<div class="r" style="left:206px;top:310px;width:1px;height:167px;background:#adadad;"></div>
<div class="r" style="left:316px;top:310px;width:1px;height:167px;background:#adadad;"></div>
<div class="r" style="left:426px;top:310px;width:1px;height:167px;background:#adadad;"></div>
<div class="r" style="left:536px;top:310px;width:1px;height:167px;background:#adadad;"></div>
<div class="r" style="left:646px;top:310px;width:1px;height:167px;background:#adadad;"></div>
<div class="r" style="left:50px;top:342px;width:705px;height:1px;background:#adadad;"></div>
<div class="r" style="left:50px;top:376px;width:705px;height:1px;background:#adadad;"></div>
<div class="r" style="left:50px;top:410px;width:705px;height:1px;background:#adadad;"></div>
<div class="r" style="left:50px;top:444px;width:705px;height:1px;background:#adadad;"></div>
<div class="r" style="left:49px;top:309px;width:157px;height:33px;background:#fff;"></div>
<div class="r" style="left:47px;top:307px;width:711px;height:173px;border:2px solid #217346;"></div>
<div class="r" style="left:753px;top:475px;width:7px;height:7px;background:#fff;"></div>
<div class="r" style="left:754px;top:476px;width:5px;height:5px;background:#217346;"></div>
<span class="t" style="left:341.60px;top:250.000px;font-size:18.60px;line-height:18.60px;color:#000000;transform:scaleX(1.0348);font-weight:bold;">Gadget Sales</span>
<span class="t" style="left:52.70px;top:285.000px;font-size:17.60px;line-height:17.60px;color:#000000;transform:scaleX(0.9787);font-weight:bold;">Gadgets</span>
<span class="t" style="left:247.80px;top:285.000px;font-size:17.60px;line-height:17.60px;color:#000000;transform:scaleX(0.9076);font-weight:bold;">Jan</span>
<span class="t" style="left:356.70px;top:285.000px;font-size:17.60px;line-height:17.60px;color:#000000;transform:scaleX(0.9904);font-weight:bold;">Feb</span>
<span class="t" style="left:465.00px;top:285.000px;font-size:17.60px;line-height:17.60px;color:#000000;transform:scaleX(1.0863);font-weight:bold;">Mar</span>
<span class="t" style="left:575.50px;top:285.000px;font-size:17.60px;line-height:17.60px;color:#000000;transform:scaleX(1.0660);font-weight:bold;">Apr</span>
<span class="t" style="left:683.50px;top:285.000px;font-size:17.60px;line-height:17.60px;color:#000000;transform:scaleX(1.1111);font-weight:bold;">May</span>
<span class="t" style="left:53.40px;top:319.000px;font-size:17.60px;line-height:17.60px;color:#000000;transform:scaleX(1.0367);">Laptops</span>
<span class="t" style="left:251.21px;top:319.000px;font-size:17.80px;line-height:17.80px;color:#000000;transform:scaleX(1.0600);">50</span>
<span class="t" style="left:361.21px;top:319.000px;font-size:17.80px;line-height:17.80px;color:#000000;transform:scaleX(1.0600);">45</span>
<span class="t" style="left:471.21px;top:319.000px;font-size:17.80px;line-height:17.80px;color:#000000;transform:scaleX(1.0600);">10</span>
<span class="t" style="left:581.21px;top:319.000px;font-size:17.80px;line-height:17.80px;color:#000000;transform:scaleX(1.0600);">35</span>
<span class="t" style="left:691.21px;top:319.000px;font-size:17.80px;line-height:17.80px;color:#000000;transform:scaleX(1.0600);">60</span>
<span class="t" style="left:53.20px;top:353.000px;font-size:17.60px;line-height:17.60px;color:#000000;transform:scaleX(1.0034);">Phones</span>
<span class="t" style="left:251.21px;top:353.000px;font-size:17.80px;line-height:17.80px;color:#000000;transform:scaleX(1.0600);">20</span>
<span class="t" style="left:361.21px;top:353.000px;font-size:17.80px;line-height:17.80px;color:#000000;transform:scaleX(1.0600);">19</span>
<span class="t" style="left:471.21px;top:353.000px;font-size:17.80px;line-height:17.80px;color:#000000;transform:scaleX(1.0600);">54</span>
<span class="t" style="left:581.21px;top:353.000px;font-size:17.80px;line-height:17.80px;color:#000000;transform:scaleX(1.0600);">39</span>
<span class="t" style="left:691.21px;top:353.000px;font-size:17.80px;line-height:17.80px;color:#000000;transform:scaleX(1.0600);">35</span>
<span class="t" style="left:53.20px;top:387.000px;font-size:17.60px;line-height:17.60px;color:#000000;transform:scaleX(1.0517);">Music Box</span>
<span class="t" style="left:251.21px;top:387.000px;font-size:17.80px;line-height:17.80px;color:#000000;transform:scaleX(1.0600);">34</span>
<span class="t" style="left:361.21px;top:387.000px;font-size:17.80px;line-height:17.80px;color:#000000;transform:scaleX(1.0600);">54</span>
<span class="t" style="left:471.21px;top:387.000px;font-size:17.80px;line-height:17.80px;color:#000000;transform:scaleX(1.0600);">67</span>
<span class="t" style="left:581.21px;top:387.000px;font-size:17.80px;line-height:17.80px;color:#000000;transform:scaleX(1.0600);">70</span>
<span class="t" style="left:691.21px;top:387.000px;font-size:17.80px;line-height:17.80px;color:#000000;transform:scaleX(1.0600);">89</span>
<span class="t" style="left:53.20px;top:421.000px;font-size:17.60px;line-height:17.60px;color:#000000;transform:scaleX(1.0357);">Keyboards</span>
<span class="t" style="left:251.21px;top:421.000px;font-size:17.80px;line-height:17.80px;color:#000000;transform:scaleX(1.0600);">50</span>
<span class="t" style="left:361.21px;top:421.000px;font-size:17.80px;line-height:17.80px;color:#000000;transform:scaleX(1.0600);">36</span>
<span class="t" style="left:471.21px;top:421.000px;font-size:17.80px;line-height:17.80px;color:#000000;transform:scaleX(1.0600);">26</span>
<span class="t" style="left:581.21px;top:421.000px;font-size:17.80px;line-height:17.80px;color:#000000;transform:scaleX(1.0600);">45</span>
<span class="t" style="left:691.21px;top:421.000px;font-size:17.80px;line-height:17.80px;color:#000000;transform:scaleX(1.0600);">23</span>
<span class="t" style="left:53.20px;top:455.000px;font-size:17.60px;line-height:17.60px;color:#000000;transform:scaleX(1.0625);">Mouse</span>
<span class="t" style="left:251.21px;top:455.000px;font-size:17.80px;line-height:17.80px;color:#000000;transform:scaleX(1.0600);">46</span>
<span class="t" style="left:361.21px;top:455.000px;font-size:17.80px;line-height:17.80px;color:#000000;transform:scaleX(1.0600);">50</span>
<span class="t" style="left:471.21px;top:455.000px;font-size:17.80px;line-height:17.80px;color:#000000;transform:scaleX(1.0600);">43</span>
<span class="t" style="left:581.21px;top:455.000px;font-size:17.80px;line-height:17.80px;color:#000000;transform:scaleX(1.0600);">60</span>
<span class="t" style="left:691.21px;top:455.000px;font-size:17.80px;line-height:17.80px;color:#000000;transform:scaleX(1.0600);">43</span>
<div class="r" style="left:1138px;top:208px;width:22px;height:470px;background:#e6e6e6;"></div>
<div class="r" style="left:1141px;top:225px;width:15px;height:439px;background:#d9d9d9;"></div>
<div class="r" style="left:1141px;top:210px;width:15px;height:15px;background:#fff;border:1px solid #ababab;"></div>
<svg class="r" style="left:1145px;top:215px;" width="7" height="4" viewBox="0 0 7 4"><path d="M0 4H7L3.5 0Z" fill="#777"/></svg>
<div class="r" style="left:1141px;top:225px;width:15px;height:262px;background:#fff;border:1px solid #ababab;"></div>
<div class="r" style="left:1141px;top:664px;width:15px;height:13px;background:#fff;border:1px solid #ababab;"></div>
<svg class="r" style="left:1145px;top:669px;" width="7" height="4" viewBox="0 0 7 4"><path d="M0 0H7L3.5 4Z" fill="#777"/></svg>
<div class="r" style="left:1px;top:678px;width:1159px;height:26px;background:#e6e6e6;"></div>
<div class="r" style="left:1px;top:677px;width:1137px;height:1px;background:#b9b9b9;"></div>
<svg class="r" style="left:27px;top:686px;" width="5" height="8" viewBox="0 0 5 8"><path d="M5 0V8L0 4Z" fill="#c0c0c0"/></svg>
<svg class="r" style="left:57px;top:686px;" width="5" height="8" viewBox="0 0 5 8"><path d="M0 0V8L5 4Z" fill="#c0c0c0"/></svg>
<div class="r" style="left:101px;top:681px;width:1px;height:20px;background:#b0b0b0;"></div>
<span class="t" style="left:113.80px;top:684.000px;font-size:13.00px;line-height:13.00px;color:#444;transform:scaleX(0.9320);">Sheet1</span>
<div class="r" style="left:166.5px;top:678px;width:64.5px;height:23px;background:#fff;"></div>
<div class="r" style="left:166.5px;top:699px;width:64.5px;height:2px;background:#217346;"></div>
<span class="t" style="left:178.00px;top:684.000px;font-size:13.00px;line-height:13.00px;color:#217346;transform:scaleX(0.9624);font-weight:bold;">Sheet2</span>
<svg class="r" style="left:263.7px;top:682.8px;" width="16" height="16" viewBox="0 0 16 16"><circle cx="8" cy="8" r="7.3" fill="none" stroke="#5a5a5a" stroke-width="1.2"/><path d="M8 4.2V11.8M4.2 8H11.8" stroke="#5a5a5a" stroke-width="1.4" fill="none"/></svg>
<div class="r" style="left:728px;top:684px;width:396px;height:14px;background:#d8d8d8;"></div>
<div class="r" style="left:728px;top:684px;width:351px;height:14px;background:#fff;border:1px solid #ababab;"></div>
<div class="r" style="left:1124px;top:684px;width:14px;height:14px;background:#fff;border:1px solid #ababab;"></div>
<svg class="r" style="left:1129px;top:687.5px;" width="4" height="7" viewBox="0 0 4 7"><path d="M0 0V7L4 3.5Z" fill="#555"/></svg>
<div class="r" style="left:714px;top:684px;width:14px;height:14px;background:#fff;border:1px solid #ababab;"></div>
<svg class="r" style="left:718px;top:687.5px;" width="4" height="7" viewBox="0 0 4 7"><path d="M4 0V7L0 3.5Z" fill="#555"/></svg>
<div class="r" style="left:696.2px;top:682.5px;width:1.6px;height:1.6px;background:#909090;"></div>
<div class="r" style="left:696.2px;top:686.5px;width:1.6px;height:1.6px;background:#909090;"></div>
<div class="r" style="left:696.2px;top:690.5px;width:1.6px;height:1.6px;background:#909090;"></div>
<div class="r" style="left:1px;top:705px;width:1159px;height:23px;background:#f3f2f1;"></div>
<div class="r" style="left:1px;top:704.5px;width:1159px;height:1px;background:#c6c6c6;"></div>
<span class="t" style="left:9.00px;top:711.000px;font-size:12.20px;line-height:12.20px;color:#444444;transform:scaleX(0.9075);">Enter</span>
<span class="t" style="left:55.00px;top:711.000px;font-size:12.20px;line-height:12.20px;color:#444444;transform:scaleX(0.9598);">Workbook Statistics</span>
<svg class="r" style="left:177.5px;top:709px;" width="14" height="14" viewBox="0 0 14 14"><g fill="none" stroke="#555" stroke-width="1"><circle cx="6" cy="2.5" r="1.7"/><path d="M1 5.5C4 6.5 8 6.5 11 5.5M4.5 6.3V9L2.5 13M7.5 6.3V9L9 11"/><path d="M8.5 9.5L13 13.5M13 9.5L8.5 13.5"/></g></svg>
<span class="t" style="left:196.00px;top:711.000px;font-size:12.20px;line-height:12.20px;color:#444444;transform:scaleX(0.9304);">Accessibility: Investigate</span>
<span class="t" style="left:622.50px;top:711.000px;font-size:12.20px;line-height:12.20px;color:#444444;transform:scaleX(0.8909);">Average: 44.12</span>
<span class="t" style="left:712.50px;top:711.000px;font-size:12.20px;line-height:12.20px;color:#444444;transform:scaleX(0.9357);">Count: 30</span>
<span class="t" style="left:778.50px;top:711.000px;font-size:12.20px;line-height:12.20px;color:#444444;transform:scaleX(0.8864);">Sum: 1103</span>
<svg class="r" style="left:861px;top:709px;" width="14" height="14" viewBox="0 0 14 14"><path d="M0.5 0.5H13.5V13.5H0.5ZM0.5 4.5H13.5M0.5 9.5H13.5M4.5 0.5V13.5M9.5 0.5V13.5" fill="none" stroke="#b0aeac"/></svg>
<svg class="r" style="left:901px;top:709px;" width="14" height="14" viewBox="0 0 14 14"><path d="M0.5 0.5H13.5V13.5H0.5Z" fill="none" stroke="#b0aeac"/><path d="M3.5 3.5H10.5V10.5H3.5ZM5 5.5H9M5 7.5H9" fill="none" stroke="#b0aeac"/></svg>
<svg class="r" style="left:941.5px;top:707.5px;" width="14" height="14" viewBox="0 0 14 14"><path d="M0.5 0.5H13.5V13.5H0.5ZM4.5 0.5V6.5H9.5V0.5" fill="none" stroke="#b0aeac"/></svg>
<div class="r" style="left:973px;top:716px;width:8px;height:1px;background:#b0aeac;"></div>
<div class="r" style="left:987.5px;top:716px;width:99.5px;height:1px;background:#7a7a7a;"></div>
<div class="r" style="left:1037px;top:712px;width:1px;height:9px;background:#7a7a7a;"></div>
<div class="r" style="left:1091px;top:716px;width:9px;height:1px;background:#b0aeac;"></div>
<div class="r" style="left:1095px;top:712px;width:1px;height:9px;background:#b0aeac;"></div>
<span class="t" style="left:1113.70px;top:710.000px;font-size:11.60px;line-height:11.60px;color:#aeaeae;transform:scaleX(0.8855);">172%</span>
<div class="r" style="left:1159px;top:0px;width:1px;height:728px;background:#8e8e8e;"></div>
<div class="r" style="left:0px;top:727px;width:1160px;height:1px;background:#8e8e8e;"></div>
<span class="t" style="left:102.50px;top:554.000px;font-size:20.30px;line-height:20.30px;color:#000000;transform:scaleX(1.0700);font-weight:bold;-webkit-text-stroke:0.35px #000;">Create Sparklines</span>
<span class="t" style="left:139.00px;top:582.000px;font-size:20.30px;line-height:20.30px;color:#000000;transform:scaleX(1.0377);font-weight:bold;-webkit-text-stroke:0.35px #000;">Dialog Box</span>
<svg class="r" style="left:279px;top:568.7px;" width="130" height="20" viewBox="0 0 130 20"><path d="M0.5 10H116" stroke="#000" stroke-width="3.3" fill="none"/><path d="M127.7 10L108 3.6L112.5 10L108 16.4Z" fill="#000"/></svg>
<span class="t" style="left:865.90px;top:546.000px;font-size:22.80px;line-height:22.80px;color:#000000;transform:scaleX(1.0670);font-weight:bold;-webkit-text-stroke:0.4px #000;">Data Range</span>
<span class="t" style="left:856.90px;top:612.000px;font-size:22.80px;line-height:22.80px;color:#000000;transform:scaleX(1.0567);font-weight:bold;-webkit-text-stroke:0.4px #000;">Location Range</span>
<div class="r" style="left:413px;top:492px;width:317px;height:196px;background:#f0f0f0;border:1px solid #9a9a9a;box-shadow:0 3px 14px 2px rgba(0,0,0,0.32);"></div>
<div class="r" style="left:410px;top:688.5px;width:323px;height:5px;background:rgba(0,0,0,0.10);"></div>
<div class="r" style="left:730px;top:489px;width:3px;height:200px;background:rgba(0,0,0,0.08);"></div>
<div class="r" style="left:407px;top:485px;width:329px;height:211px;border:3px solid #000;border-radius:6px;"></div>
<div class="r" style="left:414px;top:493px;width:315px;height:30px;background:#ffffff;"></div>
<span class="t" style="left:422.40px;top:502.000px;font-size:12.20px;line-height:12.20px;color:#1a1a1a;transform:scaleX(0.9206);-webkit-text-stroke:0.2px #1a1a1a;">Create Sparklines</span>
<span class="t" style="left:658.50px;top:502.000px;font-size:12.50px;line-height:12.50px;color:#1a1a1a;transform:scaleX(0.7286);">?</span>
<svg class="r" style="left:700.5px;top:502px;" width="11" height="11" viewBox="0 0 11 11"><path d="M0.5 0.5L10.5 10.5M10.5 0.5L0.5 10.5" fill="none" stroke="#1a1a1a" stroke-width="1"/></svg>
<span class="t" style="left:421.60px;top:532.000px;font-size:11.40px;line-height:11.40px;color:#1a1a1a;transform:scaleX(1.0291);-webkit-text-stroke:0.2px #1a1a1a;">Choose the data that you want</span>
<div class="r" style="left:587px;top:536px;width:136px;height:1px;background:#dcdcdc;"></div>
<span class="t" style="left:430.30px;top:556.000px;font-size:11.40px;line-height:11.40px;color:#1a1a1a;transform:scaleX(0.9703);-webkit-text-stroke:0.2px #1a1a1a;">Data Range:</span>
<div class="r" style="left:430.3px;top:566.2px;width:7.6px;height:1.1px;background:#1a1a1a;"></div>
<div class="r" style="left:503px;top:550.3px;width:199px;height:20.4px;background:#fff;border:1px solid #b2b5ba;"></div>
<span class="t" style="left:507.40px;top:557.000px;font-size:10.40px;line-height:10.40px;color:#222;transform:scaleX(0.9531);">A3:F7</span>
<div class="r" style="left:701.3px;top:550.3px;width:21.6px;height:20.4px;background:#e4e4e4;border:1.6px solid #adb0b5;border-left-width:1px;"></div>
<div class="r" style="left:704.0px;top:553.8px;width:15.8px;height:13.4px;background:#ffffff;"></div>
<svg class="r" style="left:706.9px;top:555.0px;" width="8.4" height="10.4" viewBox="0 0 8.4 10.4"><path d="M4.2 0L8.4 4.2V5.2H5.3V8H3.1V5.2H0V4.2Z" fill="#000"/><path d="M0.1 9.6H8.3" stroke="#000" stroke-width="1.1" fill="none"/></svg>
<span class="t" style="left:421.60px;top:596.000px;font-size:11.40px;line-height:11.40px;color:#1a1a1a;transform:scaleX(1.0188);-webkit-text-stroke:0.2px #1a1a1a;">Choose where you want the sparklines to be placed</span>
<div class="r" style="left:693px;top:600px;width:30px;height:1px;background:#dcdcdc;"></div>
<span class="t" style="left:430.30px;top:620.000px;font-size:11.40px;line-height:11.40px;color:#1a1a1a;transform:scaleX(0.9867);-webkit-text-stroke:0.2px #1a1a1a;">Location Range:</span>
<div class="r" style="left:430.3px;top:630.7px;width:4.8px;height:1.1px;background:#1a1a1a;"></div>
<div class="r" style="left:523px;top:614.5px;width:179px;height:20.4px;background:#fff;border:1px solid #b2b5ba;"></div>
<div class="r" style="left:527.2px;top:618.2px;width:1px;height:12.4px;background:#000;"></div>
<div class="r" style="left:701.3px;top:614.5px;width:21.6px;height:20.4px;background:#e4e4e4;border:1.6px solid #adb0b5;border-left-width:1px;"></div>
<div class="r" style="left:704.0px;top:618.0px;width:15.8px;height:13.4px;background:#ffffff;"></div>
<svg class="r" style="left:706.9px;top:619.2px;" width="8.4" height="10.4" viewBox="0 0 8.4 10.4"><path d="M4.2 0L8.4 4.2V5.2H5.3V8H3.1V5.2H0V4.2Z" fill="#000"/><path d="M0.1 9.6H8.3" stroke="#000" stroke-width="1.1" fill="none"/></svg>
<div class="r" style="left:565px;top:659px;width:73px;height:21px;background:#e1e1e1;border:2px solid #0078d7;"></div>
<span class="t" style="left:594.50px;top:665.000px;font-size:11.40px;line-height:11.40px;color:#1a1a1a;transform:scaleX(0.8545);-webkit-text-stroke:0.2px #1a1a1a;">OK</span>
<div class="r" style="left:649px;top:659px;width:73px;height:21px;background:#e1e1e1;border:1px solid #adadad;"></div>
<span class="t" style="left:668.30px;top:665.000px;font-size:11.40px;line-height:11.40px;color:#1a1a1a;transform:scaleX(0.9465);-webkit-text-stroke:0.2px #1a1a1a;">Cancel</span>
<div class="r" style="left:725.3px;top:684.3px;width:2px;height:2px;background:#b0b0b0;"></div>
<div class="r" style="left:722.3px;top:684.3px;width:2px;height:2px;background:#b0b0b0;"></div>
<div class="r" style="left:725.3px;top:681.3px;width:2px;height:2px;background:#b0b0b0;"></div>
<div class="r" style="left:719.3px;top:684.3px;width:2px;height:2px;background:#b0b0b0;"></div>
<div class="r" style="left:725.3px;top:678.3px;width:2px;height:2px;background:#b0b0b0;"></div>
<div class="r" style="left:722.3px;top:681.3px;width:2px;height:2px;background:#b0b0b0;"></div>
<svg class="r" style="left:718px;top:550px;" width="140" height="20" viewBox="0 0 140 20"><path d="M14 9.4L139 8.4" stroke="#000" stroke-width="3.3" fill="none"/><path d="M2.8 9.4L20.3 3.6L17 9.4L20.3 15.2Z" fill="#000"/></svg>
<svg class="r" style="left:646px;top:614px;" width="208" height="20" viewBox="0 0 208 20"><path d="M14 10.1L207 10.7" stroke="#000" stroke-width="3.3" fill="none"/><path d="M2 10.1L20 4.1L16 10.1L20 16.1Z" fill="#000"/></svg>
<svg class="r" style="left:1056px;top:464px;shape-rendering:crispEdges;" width="16" height="16" viewBox="0 0 16 16"><path d="M4.5 0.5H9.5V4.5H13.5V9.5H9.5V13.5H4.5V9.5H0.5V4.5H4.5Z" fill="#fff" stroke="#000" stroke-width="1"/><path d="M10.5 1V4.5M14.5 5V10.5H10M10.5 10V14.5H5M1 10.5H4.5" stroke="#000" stroke-width="1" fill="none"/></svg>
</body></html>
